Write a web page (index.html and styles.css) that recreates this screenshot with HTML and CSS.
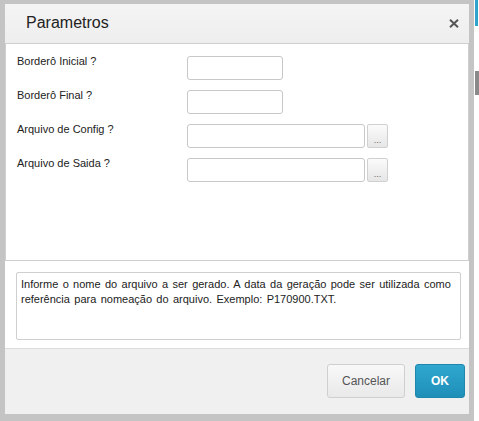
FILE: index.html
```html
<!DOCTYPE html>
<html lang="pt">
<head>
<meta charset="utf-8">
<title>Parametros</title>
<link rel="stylesheet" href="styles.css">
</head>
<body>
<div class="screen">
  <div class="dialog">
    <div class="header">
      <span class="title">Parametros</span>
      <svg class="close" width="10" height="9" viewBox="0 0 10 9"><path d="M1 0.8 L9 8.2 M9 0.8 L1 8.2" stroke="#555" stroke-width="2" fill="none"/></svg>
    </div>
    <div class="panel">
      <div class="row">
        <label class="label">Borderô Inicial ?</label>
        <div class="input short"></div>
      </div>
      <div class="row">
        <label class="label">Borderô Final ?</label>
        <div class="input short"></div>
      </div>
      <div class="row">
        <label class="label">Arquivo de Config ?</label>
        <div class="input long"></div>
        <div class="browse">...</div>
      </div>
      <div class="row">
        <label class="label">Arquivo de Saida ?</label>
        <div class="input long"></div>
        <div class="browse">...</div>
      </div>
    </div>
    <div class="help-area">
      <div class="help">Informe o nome do arquivo a ser gerado. A data da geração pode ser utilizada como referência para nomeação do arquivo. Exemplo: P170900.TXT.</div>
    </div>
    <div class="footer">
      <button class="btn cancel">Cancelar</button>
      <button class="btn ok">OK</button>
    </div>
  </div>
  <div class="side">
    <div class="side-blue"></div>
    <div class="side-gap"></div>
    <div class="side-bar"></div>
  </div>
</div>
</body>
</html>
```
FILE: styles.css
```css
* { box-sizing: border-box; }
html, body { margin: 0; padding: 0; background: #ffffff; }
body { font-family: "Liberation Sans", Arial, sans-serif; color: #222; }

.screen { display: flex; width: 479px; height: 421px; overflow: hidden; }

.dialog {
  width: 474px;
  height: 421px;
  border-style: solid;
  border-color: #c4c4c4;
  border-width: 4px 5px 7px 5px;
  display: flex;
  flex-direction: column;
  background: #ffffff;
}

.header {
  height: 40px;
  flex: none;
  background: linear-gradient(#f4f4f4, #eeeeee);
  border-bottom: 1px solid #cfcfcf;
  display: flex;
  align-items: center;
  justify-content: space-between;
  padding: 0 10px 2px 21px;
}
.title { font-size: 16px; color: #222; }
.close { display: block; margin-top: 1px; }

.panel {
  height: 217px;
  flex: none;
  border: 1px solid #cfcfcf;
  border-top: 0;
  padding: 12px 0 0 11px;
  display: flex;
  flex-direction: column;
  gap: 10px;
}
.row { display: flex; align-items: flex-start; height: 24px; }
.label { width: 170px; font-size: 11px; line-height: 13px; margin-top: -1px; color: #222; }
.input {
  height: 24px;
  border: 1px solid #c8c8c8;
  border-radius: 3px;
  background: #fff;
}
.input.short { width: 96px; }
.input.long { width: 178px; }
.browse {
  width: 21px;
  height: 24px;
  margin-left: 2px;
  border: 1px solid #d0d0d0;
  border-radius: 2px;
  background: linear-gradient(#fbfbfb, #e6e6e6);
  font-size: 9px;
  line-height: 9px;
  color: #666;
  text-align: center;
  padding-top: 11px;
}

.help-area {
  height: 87px;
  flex: none;
  padding: 11px 8px 8px 11px;
  background: #ffffff;
}
.help {
  height: 68px;
  border: 1px solid #cfcfcf;
  border-radius: 2px;
  padding: 4px 4px 0 4px;
  font-size: 11px;
  word-spacing: 1.3px;
  line-height: 15px;
  color: #222;
}

.footer {
  flex: 1;
  border-top: 1px solid #dcdcdc;
  background: #f0f0f0;
  display: flex;
  justify-content: flex-end;
  align-items: flex-start;
  gap: 10px;
  padding: 15px 4px 0 0;
}
.btn {
  height: 34px;
  font-family: "Liberation Sans", Arial, sans-serif;
  font-size: 12px;
  border-radius: 3px;
  cursor: pointer;
}
.cancel {
  width: 78px;
  border: 1px solid #cfcfcf;
  background: linear-gradient(#f8f8f8, #e9e9e9);
  color: #555;
}
.ok {
  width: 50px;
  border: 1px solid #1f87ad;
  background: linear-gradient(#2fa7cf, #1f8fb8);
  color: #ffffff;
  font-weight: bold;
}

.side { width: 5px; display: flex; flex-direction: column; }
.side-blue { height: 26px; margin-left: 1px; width: 3px; background: #2fa3c9; }
.side-gap { height: 45px; }
.side-bar { height: 24px; margin-left: 1px; background: #8a8a8a; }
```
